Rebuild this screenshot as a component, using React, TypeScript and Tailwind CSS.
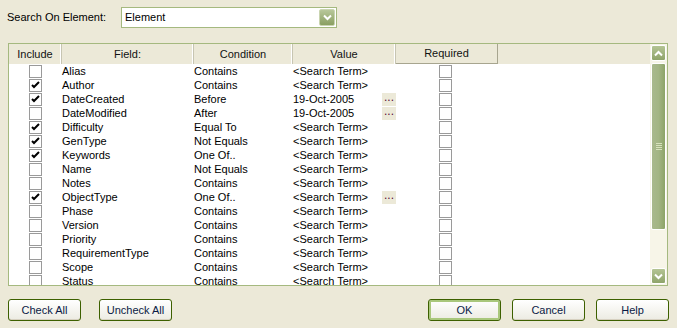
import React from 'react';

type Row = {
  field: string;
  condition: string;
  value: string;
  include: boolean;
  more?: boolean;
};

const rows: Row[] = [
  { field: 'Alias', condition: 'Contains', value: '<Search Term>', include: false },
  { field: 'Author', condition: 'Contains', value: '<Search Term>', include: true },
  { field: 'DateCreated', condition: 'Before', value: '19-Oct-2005', include: true, more: true },
  { field: 'DateModified', condition: 'After', value: '19-Oct-2005', include: false, more: true },
  { field: 'Difficulty', condition: 'Equal To', value: '<Search Term>', include: true },
  { field: 'GenType', condition: 'Not Equals', value: '<Search Term>', include: true },
  { field: 'Keywords', condition: 'One Of..', value: '<Search Term>', include: true },
  { field: 'Name', condition: 'Not Equals', value: '<Search Term>', include: false },
  { field: 'Notes', condition: 'Contains', value: '<Search Term>', include: false },
  { field: 'ObjectType', condition: 'One Of..', value: '<Search Term>', include: true, more: true },
  { field: 'Phase', condition: 'Contains', value: '<Search Term>', include: false },
  { field: 'Version', condition: 'Contains', value: '<Search Term>', include: false },
  { field: 'Priority', condition: 'Contains', value: '<Search Term>', include: false },
  { field: 'RequirementType', condition: 'Contains', value: '<Search Term>', include: false },
  { field: 'Scope', condition: 'Contains', value: '<Search Term>', include: false },
  { field: 'Status', condition: 'Contains', value: '<Search Term>', include: false },
];

function Check({ checked }: { checked: boolean }) {
  return (
    <div className="w-[13px] h-[13px] border border-[#9a9a9a] bg-white flex items-center justify-center">
      {checked && (
        <svg width="9" height="9" viewBox="0 0 9 9">
          <path d="M1 4 L3 6 L8 1" stroke="#000" strokeWidth="2" fill="none" />
        </svg>
      )}
    </div>
  );
}

function XpButton({ label, isDefault }: { label: string; isDefault?: boolean }) {
  return (
    <button
      className={
        'w-[73px] h-[22px] rounded-[3px] border border-[#3d6000] bg-gradient-to-b from-white to-[#ecebe2] text-[11px] text-[#0a1a44] flex items-center justify-center ' +
        (isDefault ? 'shadow-[inset_0_0_0_2px_#a9c77c]' : 'shadow-[inset_0_-1px_0_#d6d0c0]')
      }
    >
      {label}
    </button>
  );
}

function HeaderCell({ label, w }: { label: string; w: string }) {
  return (
    <div className={`${w} h-full flex items-center justify-center border-r border-[#c7c5b2] shadow-[inset_-1px_0_0_#fff]`}>
      {label}
    </div>
  );
}

export default function App() {
  return (
    <div
      className="w-[677px] h-[328px] bg-[#ece9d8] text-[11px] text-black overflow-hidden"
      style={{ fontFamily: '"Liberation Sans", Arial, sans-serif' }}
    >
      {/* 検索対象 */}
      <div className="flex items-center pt-[7px] pl-[7px] h-[28px]">
        <div className="w-[114px]">Search On Element:</div>
        <div className="w-[216px] h-[21px] border border-[#a5b97f] bg-white flex items-center justify-between pl-[3px] pr-[1px]">
          <span>Element</span>
          <div className="w-[16px] h-[17px] rounded-[2px] bg-gradient-to-b from-[#b8c79a] to-[#8a9f62] border border-[#c9d4b0] flex items-center justify-center">
            <svg width="9" height="7" viewBox="0 0 9 7">
              <path d="M1 1.5 L4.5 5 L8 1.5" stroke="#fff" strokeWidth="2" fill="none" />
            </svg>
          </div>
        </div>
      </div>

      {/* テーブル */}
      <div className="ml-[8px] mt-[15px] w-[660px] h-[243px] border border-[#a5b97f] bg-white flex">
        <div className="flex-1 flex flex-col overflow-hidden">
          <div className="h-[20px] bg-[#ece9d8] flex text-[#111]">
            <HeaderCell label="Include" w="w-[53px]" />
            <HeaderCell label="Field:" w="w-[132px]" />
            <HeaderCell label="Condition" w="w-[99px]" />
            <HeaderCell label="Value" w="w-[103px]" />
            <div className="w-[102px] h-full flex items-center justify-center border-r border-b border-[#a7a58f]">
              Required
            </div>
          </div>
          <div className="flex-1 overflow-hidden">
            {rows.map((r) => (
              <div key={r.field} className="h-[14px] flex items-center">
                <div className="w-[53px] flex pl-[20px]">
                  <Check checked={r.include} />
                </div>
                <div className="w-[132px]">{r.field}</div>
                <div className="w-[99px]">{r.condition}</div>
                <div className="w-[103px] flex items-center">
                  <span className="w-[89px]">{r.value}</span>
                  {r.more && (
                    <span className="w-[14px] h-[13px] bg-[#ece9d8] text-[#5a0a3a] text-[12px] leading-[9px] text-center tracking-[0px]">
                      ...
                    </span>
                  )}
                </div>
                <div className="w-[102px] flex pl-[43px]">
                  <Check checked={false} />
                </div>
              </div>
            ))}
          </div>
        </div>

        {/* スクロールバー */}
        <div className="w-[17px] bg-[#f7f5e8] flex flex-col items-center pt-[1px] pb-[1px]">
          <div className="w-[15px] h-[16px] rounded-[2px] border border-[#fff] bg-gradient-to-b from-[#b4c494] to-[#8fa46a] flex items-center justify-center">
            <svg width="9" height="7" viewBox="0 0 9 7">
              <path d="M1 5.5 L4.5 2 L8 5.5" stroke="#fff" strokeWidth="2" fill="none" />
            </svg>
          </div>
          <div className="w-[15px] h-[167px] mt-[2px] rounded-[2px] border border-[#fff] bg-gradient-to-r from-[#a9b98d] via-[#a3b584] to-[#8da468] flex items-center justify-center">
            <div className="flex flex-col gap-[1px]">
              <div className="w-[6px] h-px bg-[#d8e2bd]" />
              <div className="w-[6px] h-px bg-[#d8e2bd]" />
              <div className="w-[6px] h-px bg-[#d8e2bd]" />
              <div className="w-[6px] h-px bg-[#d8e2bd]" />
            </div>
          </div>
          <div className="flex-1" />
          <div className="w-[15px] h-[16px] rounded-[2px] border border-[#fff] bg-gradient-to-b from-[#b4c494] to-[#8fa46a] flex items-center justify-center">
            <svg width="9" height="7" viewBox="0 0 9 7">
              <path d="M1 1.5 L4.5 5 L8 1.5" stroke="#fff" strokeWidth="2" fill="none" />
            </svg>
          </div>
        </div>
      </div>

      {/* ボタン */}
      <div className="flex mt-[13px] pl-[8px] pr-[8px]">
        <div className="flex gap-[18px]">
          <XpButton label="Check All" />
          <XpButton label="Uncheck All" />
        </div>
        <div className="flex-1" />
        <div className="flex gap-[11px]">
          <XpButton label="OK" isDefault />
          <XpButton label="Cancel" />
          <XpButton label="Help" />
        </div>
      </div>
    </div>
  );
}
